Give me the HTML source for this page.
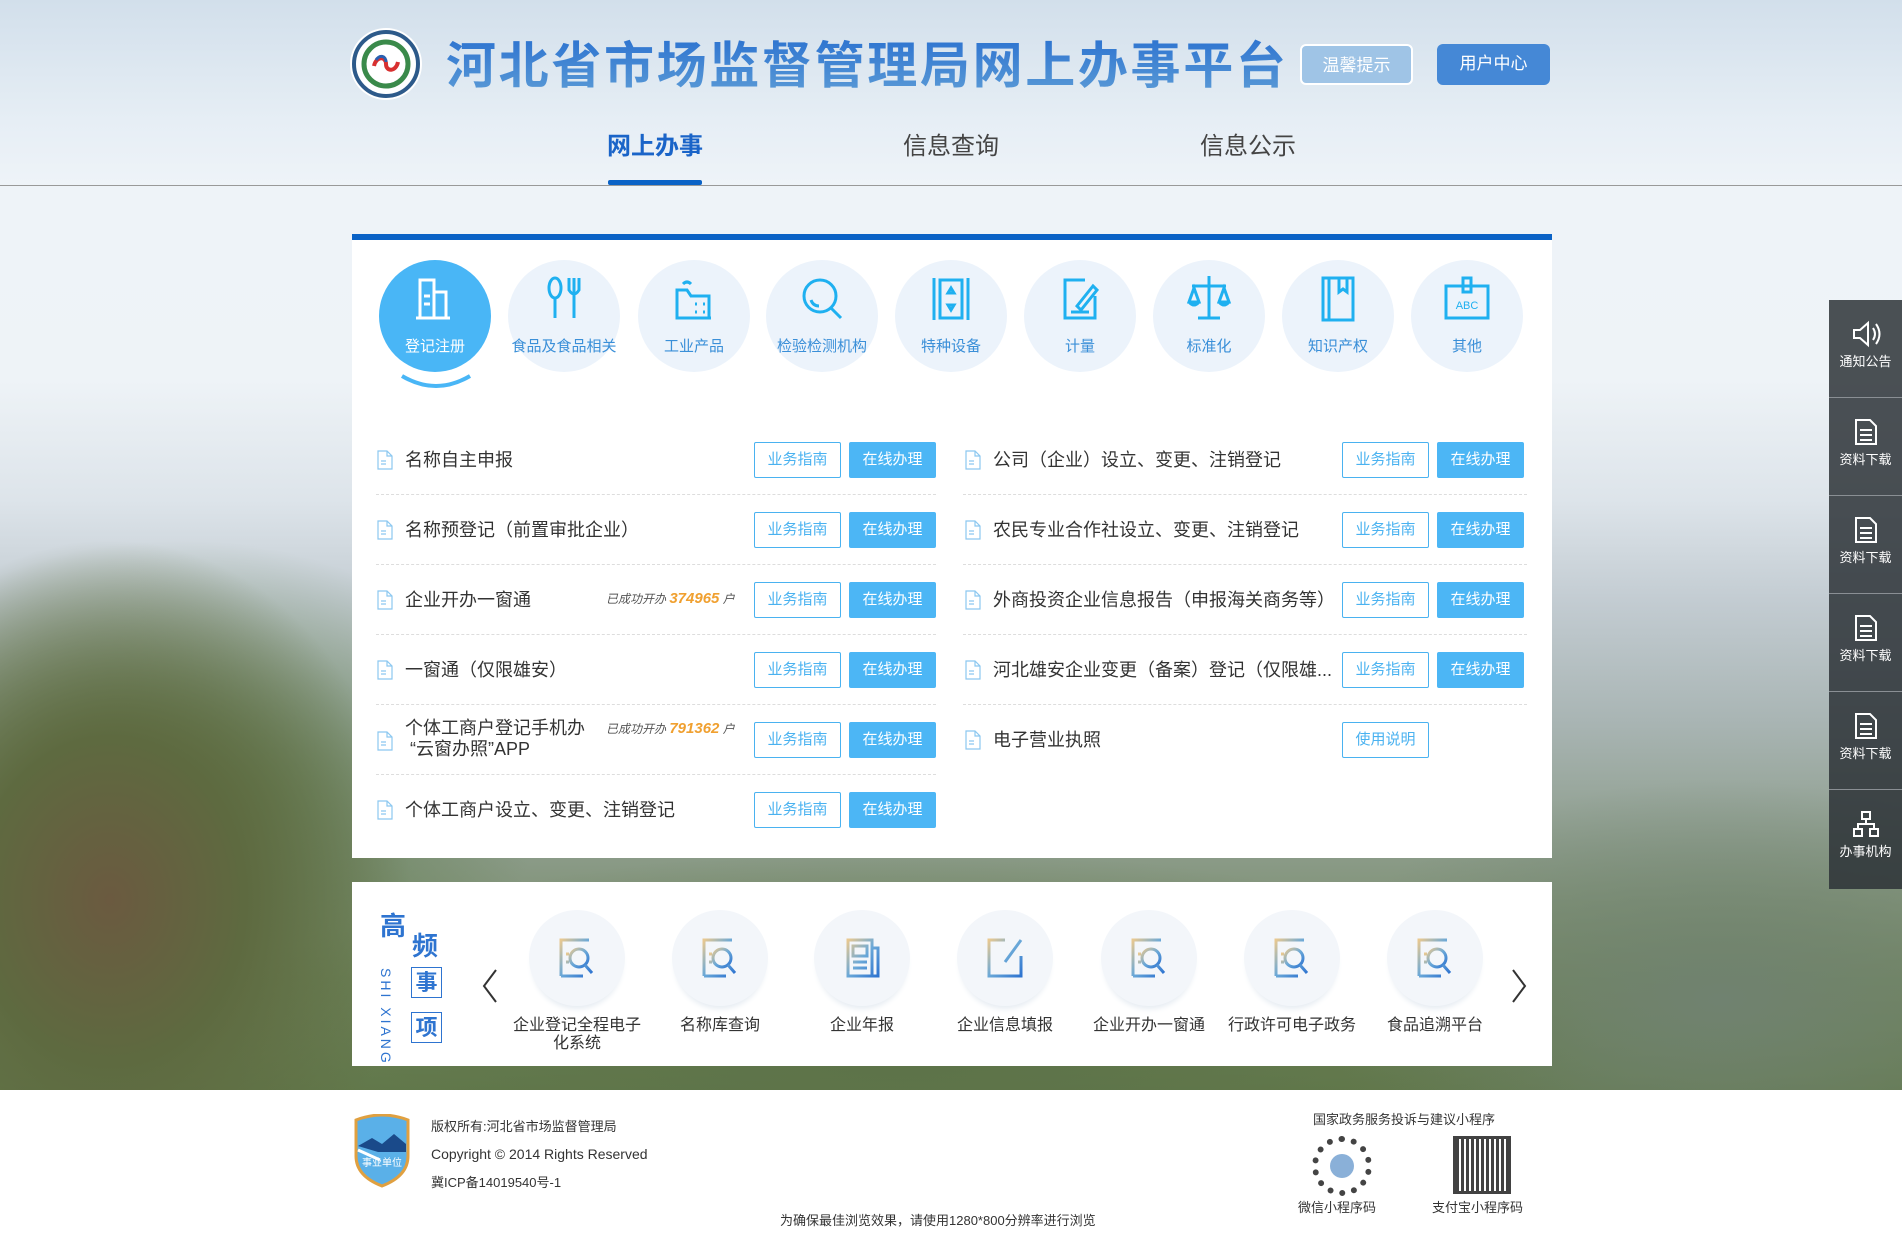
<!DOCTYPE html>
<html><head><meta charset="utf-8"><style>
*{margin:0;padding:0;box-sizing:border-box}
body{width:1902px;height:1235px;position:relative;overflow:hidden;font-family:"Liberation Sans","Noto Sans CJK SC",sans-serif;
background:
radial-gradient(ellipse 300px 360px at 110px 900px,#6b5a40 0%,#5e6a40 45%,rgba(94,106,64,0) 100%),
radial-gradient(ellipse 360px 260px at 180px 800px,#5c7a48 0%,rgba(92,122,72,0) 100%),
radial-gradient(ellipse 700px 200px at 900px 1050px,#5c7248 0%,rgba(92,114,72,0) 100%),
radial-gradient(ellipse 400px 220px at 1720px 1000px,#708270 0%,rgba(112,130,112,0) 100%),
linear-gradient(180deg,#d2dfeb 0px,#e6eef5 120px,#eef3f8 185px,#eef3f7 380px,#dde4ea 500px,#c3ccd2 600px,#a9b5b4 720px,#8c9c8a 850px,#71865e 980px,#637a4c 1090px);}
.a{position:absolute}
.title{left:446px;top:38px;width:840px;display:flex;justify-content:space-between;font-size:50px;font-weight:bold;color:#3a7fcf;line-height:56px;white-space:nowrap}
.title span{background:linear-gradient(180deg,#2e74d0,#5a9ad6);-webkit-background-clip:text;background-clip:text;-webkit-text-fill-color:transparent}
.hbtn{height:41px;width:113px;border-radius:6px;color:#fff;font-size:17px;text-align:center;line-height:39px}
.nav{font-size:24px;color:#444;top:131px;line-height:32px}
.box{background:#fff;left:352px;width:1200px}
.circ{width:112px;height:112px;border-radius:56px;background:#ecf3fb;top:260px;text-align:center}
.circ svg{margin-top:14px}
.circ span{display:block;font-size:15px;color:#3a8fd8;margin-top:6px;white-space:nowrap;margin-left:-10px;margin-right:-10px}
.row{font-size:18px;color:#333;line-height:22px;white-space:nowrap}
.doc{width:16px;height:20px}
.b1,.b2{height:36px;width:87px;font-size:15px;text-align:center;line-height:34px;border-radius:2px}
.b1{border:1px solid #4ab2f0;color:#4ab2f0;background:#fff}
.b2{background:#4cb6f5;color:#fff;border:1px solid #4cb6f5}
.line{height:0;border-top:1px dashed #ddd}
.cnt{font-size:12px;color:#555;font-style:italic;white-space:nowrap}
.cnt b{color:#f0a030;font-size:15px}
.hf{width:96px;height:96px;border-radius:48px;background:#f3f6fa;top:910px;box-shadow:0 6px 6px -3px #e6ecf2}
.hl{font-size:16px;color:#333;text-align:center;width:150px;top:1017px;line-height:18px}
.side{left:1829px;width:73px;height:98px;color:#fff;font-size:13px;text-align:center;border-bottom:1px solid #8a8f94}
.side svg{margin-top:20px}
.ft{font-size:14px;color:#333;left:431px;white-space:nowrap}
</style></head><body>

<div class="a" style="left:352px;top:30px;width:68px;height:68px;border-radius:34px;background:#fff;border:4px solid #2d5a8a;box-shadow:0 0 0 2px #fff">
<svg width="60" height="60" viewBox="0 0 60 60"><circle cx="30" cy="30" r="22" fill="none" stroke="#3a8a4a" stroke-width="5"/><circle cx="30" cy="30" r="16" fill="#fff"/><path d="M18 32c2-10 12-10 12-2s10 8 12-2" stroke="#d83030" stroke-width="4" fill="none"/><path d="M20 26c4-6 10-4 10 2" stroke="#2a60b0" stroke-width="3" fill="none"/></svg></div>
<div class="a title"><span>河</span><span>北</span><span>省</span><span>市</span><span>场</span><span>监</span><span>督</span><span>管</span><span>理</span><span>局</span><span>网</span><span>上</span><span>办</span><span>事</span><span>平</span><span>台</span></div>
<div class="a hbtn" style="left:1300px;top:44px;background:#9fc4e6;border:2px solid #fff">温馨提示</div>
<div class="a hbtn" style="left:1437px;top:44px;background:#4588d6">用户中心</div>
<div class="a nav" style="left:607px;color:#1a64c8;font-weight:bold">网上办事</div>
<div class="a" style="left:608px;top:180px;width:94px;height:5px;background:#0a62c6;border-radius:2px"></div>
<div class="a nav" style="left:903px">信息查询</div>
<div class="a nav" style="left:1200px">信息公示</div>
<div class="a" style="left:0;top:185px;width:1902px;height:1px;background:#999"></div>

<div class="a" style="left:352px;top:234px;width:1200px;height:6px;background:#0a62c6"></div>
<div class="a box" style="top:240px;height:618px"></div>

<div class="a circ" style="left:379px;background:#49b6f6"><svg width="50" height="50" viewBox="0 0 50 50" fill="none" stroke="#fff" stroke-width="3"><path d="M10 44V6h14v38M24 18h12v26M6 44h34M14 22h6M14 30h6"/></svg><span style="color:#fff">登记注册</span></div>
<svg class="a" style="left:398px;top:372px" width="76" height="20"><path d="M4 4Q38 24 72 4" stroke="#49b6f6" stroke-width="4" fill="none"/></svg>

<div class="a circ" style="left:508px"><svg width="50" height="50" viewBox="0 0 50 50" fill="none" stroke="#1fb0f0" stroke-width="3"><ellipse cx="16" cy="14" rx="6" ry="10"/><path d="M16 24v20M30 4v12q5 8 10 0V4M35 4v40"/></svg><span>食品及食品相关</span></div>
<div class="a circ" style="left:638px"><svg width="50" height="50" viewBox="0 0 50 50" fill="none" stroke="#1fb0f0" stroke-width="3"><path d="M8 44V16h10l4 6h18v22zM8 44h34M26 30h2M34 30h2M26 38h2M34 38h2M14 10q4-4 8 0"/></svg><span>工业产品</span></div>
<div class="a circ" style="left:766px"><svg width="50" height="50" viewBox="0 0 50 50" fill="none" stroke="#1fb0f0" stroke-width="3"><circle cx="23" cy="22" r="16"/><path d="M34 34l10 10M14 26q2 6 8 6"/></svg><span>检验检测机构</span></div>
<div class="a circ" style="left:895px"><svg width="50" height="50" viewBox="0 0 50 50" fill="none" stroke="#1fb0f0" stroke-width="3"><path d="M8 4v42M42 4v42M14 6h22v38H14zM25 14l-3 5h6zM25 36l-3-5h6z"/></svg><span>特种设备</span></div>
<div class="a circ" style="left:1024px"><svg width="50" height="50" viewBox="0 0 50 50" fill="none" stroke="#1fb0f0" stroke-width="3"><path d="M30 6H10v38h30V22M22 32l16-20 4 4-16 20zM16 38h18"/></svg><span>计量</span></div>
<div class="a circ" style="left:1153px"><svg width="50" height="50" viewBox="0 0 50 50" fill="none" stroke="#1fb0f0" stroke-width="3"><path d="M25 2v42M8 12h34M14 44h22M10 14l-5 14h10zM40 14l-5 14h10zM5 28q5 6 10 0M35 28q5 6 10 0"/></svg><span>标准化</span></div>
<div class="a circ" style="left:1282px"><svg width="50" height="50" viewBox="0 0 50 50" fill="none" stroke="#1fb0f0" stroke-width="3"><path d="M10 4h30v42H10zM16 4v42M26 4v14l4-3 4 3V4"/></svg><span>知识产权</span></div>
<div class="a circ" style="left:1411px"><svg width="50" height="50" viewBox="0 0 50 50" fill="none" stroke="#1fb0f0" stroke-width="3"><path d="M4 12h42v32H4zM21 12V4h8v14h-8z"/><text x="25" y="35" font-size="11" fill="#1fb0f0" stroke="none" text-anchor="middle" font-family="Liberation Sans">ABC</text></svg><span>其他</span></div>

<svg width="0" height="0" style="position:absolute"><defs><symbol id="d" viewBox="0 0 16 20"><path d="M1 1h9l5 5v13H1z M10 1v5h5 M4 11h5M4 14h5" fill="none" stroke="#8cc8f0" stroke-width="1.2"/></symbol></defs></svg>

<svg class="a doc" style="left:377px;top:450px"><use href="#d"/></svg><div class="a row" style="left:405px;top:449px">名称自主申报</div>
<div class="a b1" style="left:754px;top:442px">业务指南</div><div class="a b2" style="left:849px;top:442px">在线办理</div>
<div class="a line" style="left:376px;top:494px;width:560px"></div>

<svg class="a doc" style="left:377px;top:520px"><use href="#d"/></svg><div class="a row" style="left:405px;top:519px">名称预登记（前置审批企业）</div>
<div class="a b1" style="left:754px;top:512px">业务指南</div><div class="a b2" style="left:849px;top:512px">在线办理</div>
<div class="a line" style="left:376px;top:564px;width:560px"></div>

<svg class="a doc" style="left:377px;top:590px"><use href="#d"/></svg><div class="a row" style="left:405px;top:589px">企业开办一窗通</div>
<div class="a cnt" style="left:606px;top:590px">已成功开办 <b>374965</b> 户</div>
<div class="a b1" style="left:754px;top:582px">业务指南</div><div class="a b2" style="left:849px;top:582px">在线办理</div>
<div class="a line" style="left:376px;top:634px;width:560px"></div>

<svg class="a doc" style="left:377px;top:660px"><use href="#d"/></svg><div class="a row" style="left:405px;top:659px">一窗通（仅限雄安）</div>
<div class="a b1" style="left:754px;top:652px">业务指南</div><div class="a b2" style="left:849px;top:652px">在线办理</div>
<div class="a line" style="left:376px;top:704px;width:560px"></div>

<svg class="a doc" style="left:377px;top:731px"><use href="#d"/></svg><div class="a row" style="left:405px;top:718px;line-height:21px">个体工商户登记手机办<br>&nbsp;“云窗办照”APP</div>
<div class="a cnt" style="left:606px;top:720px">已成功开办 <b>791362</b> 户</div>
<div class="a b1" style="left:754px;top:722px">业务指南</div><div class="a b2" style="left:849px;top:722px">在线办理</div>
<div class="a line" style="left:376px;top:774px;width:560px"></div>

<svg class="a doc" style="left:377px;top:800px"><use href="#d"/></svg><div class="a row" style="left:405px;top:799px">个体工商户设立、变更、注销登记</div>
<div class="a b1" style="left:754px;top:792px">业务指南</div><div class="a b2" style="left:849px;top:792px">在线办理</div>

<svg class="a doc" style="left:965px;top:450px"><use href="#d"/></svg><div class="a row" style="left:993px;top:449px">公司（企业）设立、变更、注销登记</div>
<div class="a b1" style="left:1342px;top:442px">业务指南</div><div class="a b2" style="left:1437px;top:442px">在线办理</div>
<div class="a line" style="left:963px;top:494px;width:564px"></div>

<svg class="a doc" style="left:965px;top:520px"><use href="#d"/></svg><div class="a row" style="left:993px;top:519px">农民专业合作社设立、变更、注销登记</div>
<div class="a b1" style="left:1342px;top:512px">业务指南</div><div class="a b2" style="left:1437px;top:512px">在线办理</div>
<div class="a line" style="left:963px;top:564px;width:564px"></div>

<svg class="a doc" style="left:965px;top:590px"><use href="#d"/></svg><div class="a row" style="left:993px;top:589px">外商投资企业信息报告（申报海关商务等）</div>
<div class="a b1" style="left:1342px;top:582px">业务指南</div><div class="a b2" style="left:1437px;top:582px">在线办理</div>
<div class="a line" style="left:963px;top:634px;width:564px"></div>

<svg class="a doc" style="left:965px;top:660px"><use href="#d"/></svg><div class="a row" style="left:993px;top:659px">河北雄安企业变更（备案）登记（仅限雄...</div>
<div class="a b1" style="left:1342px;top:652px">业务指南</div><div class="a b2" style="left:1437px;top:652px">在线办理</div>
<div class="a line" style="left:963px;top:704px;width:564px"></div>

<svg class="a doc" style="left:965px;top:730px"><use href="#d"/></svg><div class="a row" style="left:993px;top:729px">电子营业执照</div>
<div class="a b1" style="left:1342px;top:722px">使用说明</div>

<div class="a box" style="top:882px;height:184px"></div>
<div class="a" style="left:380px;top:906px;font-size:26px;font-weight:bold;color:#2e74d0">高</div>
<div class="a" style="left:412px;top:926px;font-size:26px;font-weight:bold;color:#2e74d0">频</div>
<div class="a" style="left:380px;top:968px;width:14px;font-size:14px;color:#2e74d0;writing-mode:vertical-rl;letter-spacing:3px">SHI XIANG</div>
<div class="a" style="left:411px;top:967px;width:31px;height:31px;border:1px solid #2e74d0;font-size:22px;font-weight:bold;color:#2e74d0;text-align:center;line-height:29px">事</div>
<div class="a" style="left:411px;top:1012px;width:31px;height:31px;border:1px solid #2e74d0;font-size:22px;font-weight:bold;color:#2e74d0;text-align:center;line-height:29px">项</div>
<svg class="a" style="left:480px;top:968px" width="20" height="36"><path d="M16 2L4 18l12 16" stroke="#333" stroke-width="2" fill="none"/></svg>
<svg class="a" style="left:1509px;top:968px" width="20" height="36"><path d="M4 2l12 16L4 34" stroke="#333" stroke-width="2" fill="none"/></svg>

<svg width="0" height="0" style="position:absolute"><defs>
<linearGradient id="g" x1="0" y1="0" x2="1" y2="1"><stop offset="0" stop-color="#e8c890"/><stop offset=".5" stop-color="#6aa8d8"/><stop offset="1" stop-color="#2e74d0"/></linearGradient>
<symbol id="q" viewBox="0 0 44 44"><path d="M6 40V4h28M6 40h22" fill="none" stroke="url(#g)" stroke-width="3"/><circle cx="24" cy="22" r="9" fill="none" stroke="url(#g)" stroke-width="3"/><path d="M30 29l7 8M11 18h3M11 26h3" stroke="url(#g)" stroke-width="3"/></symbol>
</defs></svg>
<div class="a hf" style="left:529px"></div><svg class="a" style="left:555px;top:936px" width="44" height="44"><use href="#q"/></svg>
<div class="a hf" style="left:672px"></div><svg class="a" style="left:698px;top:936px" width="44" height="44"><use href="#q"/></svg>
<div class="a hf" style="left:814px"></div><svg class="a" style="left:840px;top:936px" width="44" height="44" viewBox="0 0 44 44"><path d="M8 4h24v36H8zM32 12h6v28H8M13 10h14v10H13zM13 26h14M13 32h14" fill="none" stroke="url(#g)" stroke-width="3"/></svg>
<div class="a hf" style="left:957px"></div><svg class="a" style="left:983px;top:936px" width="44" height="44" viewBox="0 0 44 44"><path d="M22 4H6v36h32V20M22 26L38 4" fill="none" stroke="url(#g)" stroke-width="3"/></svg>
<div class="a hf" style="left:1101px"></div><svg class="a" style="left:1127px;top:936px" width="44" height="44"><use href="#q"/></svg>
<div class="a hf" style="left:1244px"></div><svg class="a" style="left:1270px;top:936px" width="44" height="44"><use href="#q"/></svg>
<div class="a hf" style="left:1387px"></div><svg class="a" style="left:1413px;top:936px" width="44" height="44"><use href="#q"/></svg>
<div class="a hl" style="left:502px">企业登记全程电子<br>化系统</div>
<div class="a hl" style="left:645px">名称库查询</div>
<div class="a hl" style="left:787px">企业年报</div>
<div class="a hl" style="left:930px">企业信息填报</div>
<div class="a hl" style="left:1074px">企业开办一窗通</div>
<div class="a hl" style="left:1217px">行政许可电子政务</div>
<div class="a hl" style="left:1360px">食品追溯平台</div>

<div class="a" style="left:0;top:1090px;width:1902px;height:145px;background:#fff"></div>
<svg class="a" style="left:352px;top:1114px" width="60" height="74" viewBox="0 0 60 74"><path d="M4 6q26-10 52 0v36q0 20-26 30Q4 62 4 42z" fill="#5ab0e8" stroke="#e0a040" stroke-width="3"/><path d="M6 32l14-8 10 6 12-10 12 10v8q-14 0-28 0z" fill="#1a4a8a"/><path d="M6 36l22 10" stroke="#fff" stroke-width="3"/><text x="30" y="52" font-size="10" fill="#fff" text-anchor="middle" font-family="Noto Sans CJK SC">事业单位</text></svg>
<div class="a ft" style="top:1116px;font-size:13px">版权所有:河北省市场监督管理局</div>
<div class="a ft" style="top:1146px">Copyright © 2014 Rights Reserved</div>
<div class="a ft" style="top:1172px;font-size:13px">冀ICP备14019540号-1</div>
<div class="a" style="left:780px;top:1210px;font-size:13px;color:#333;white-space:nowrap">为确保最佳浏览效果，请使用1280*800分辨率进行浏览</div>
<div class="a" style="left:1313px;top:1109px;font-size:13px;color:#333;white-space:nowrap">国家政务服务投诉与建议小程序</div>
<div class="a" style="left:1312px;top:1136px;width:60px;height:60px;border-radius:30px;border:6px dotted #444"><div style="margin:12px;width:24px;height:24px;border-radius:12px;background:#8ab0d8"></div></div>
<div class="a" style="left:1453px;top:1136px;width:58px;height:58px;background:repeating-linear-gradient(90deg,#222 0 3px,#fff 3px 5px),#222;border:3px solid #222;opacity:.85"></div>
<div class="a" style="left:1298px;top:1197px;font-size:13px;color:#333">微信小程序码</div>
<div class="a" style="left:1432px;top:1197px;font-size:13px;color:#333">支付宝小程序码</div>

<div class="a" style="left:1829px;top:300px;width:73px;height:589px;background:rgba(45,50,55,.85)"></div>
<div class="a side" style="top:300px"><svg width="30" height="28" viewBox="0 0 30 28" fill="none" stroke="#fff" stroke-width="2"><path d="M3 10h6l8-7v22l-8-7H3zM22 8q4 6 0 12M25 4q7 10 0 20"/></svg><div>通知公告</div></div>
<div class="a side" style="top:398px"><svg width="24" height="28" viewBox="0 0 24 28" fill="none" stroke="#fff" stroke-width="2"><path d="M2 2h14l6 6v18H2zM6 12h12M6 17h12M6 22h12"/></svg><div>资料下载</div></div>
<div class="a side" style="top:496px"><svg width="24" height="28" viewBox="0 0 24 28" fill="none" stroke="#fff" stroke-width="2"><path d="M2 2h14l6 6v18H2zM6 12h12M6 17h12M6 22h12"/></svg><div>资料下载</div></div>
<div class="a side" style="top:594px"><svg width="24" height="28" viewBox="0 0 24 28" fill="none" stroke="#fff" stroke-width="2"><path d="M2 2h14l6 6v18H2zM6 12h12M6 17h12M6 22h12"/></svg><div>资料下载</div></div>
<div class="a side" style="top:692px"><svg width="24" height="28" viewBox="0 0 24 28" fill="none" stroke="#fff" stroke-width="2"><path d="M2 2h14l6 6v18H2zM6 12h12M6 17h12M6 22h12"/></svg><div>资料下载</div></div>
<div class="a side" style="top:790px;border:0"><svg width="28" height="28" viewBox="0 0 28 28" fill="none" stroke="#fff" stroke-width="2"><path d="M10 2h8v7h-8zM2 19h8v7H2zM18 19h8v7h-8zM14 9v5M6 19v-5h16v5"/></svg><div>办事机构</div></div>
</body></html>
